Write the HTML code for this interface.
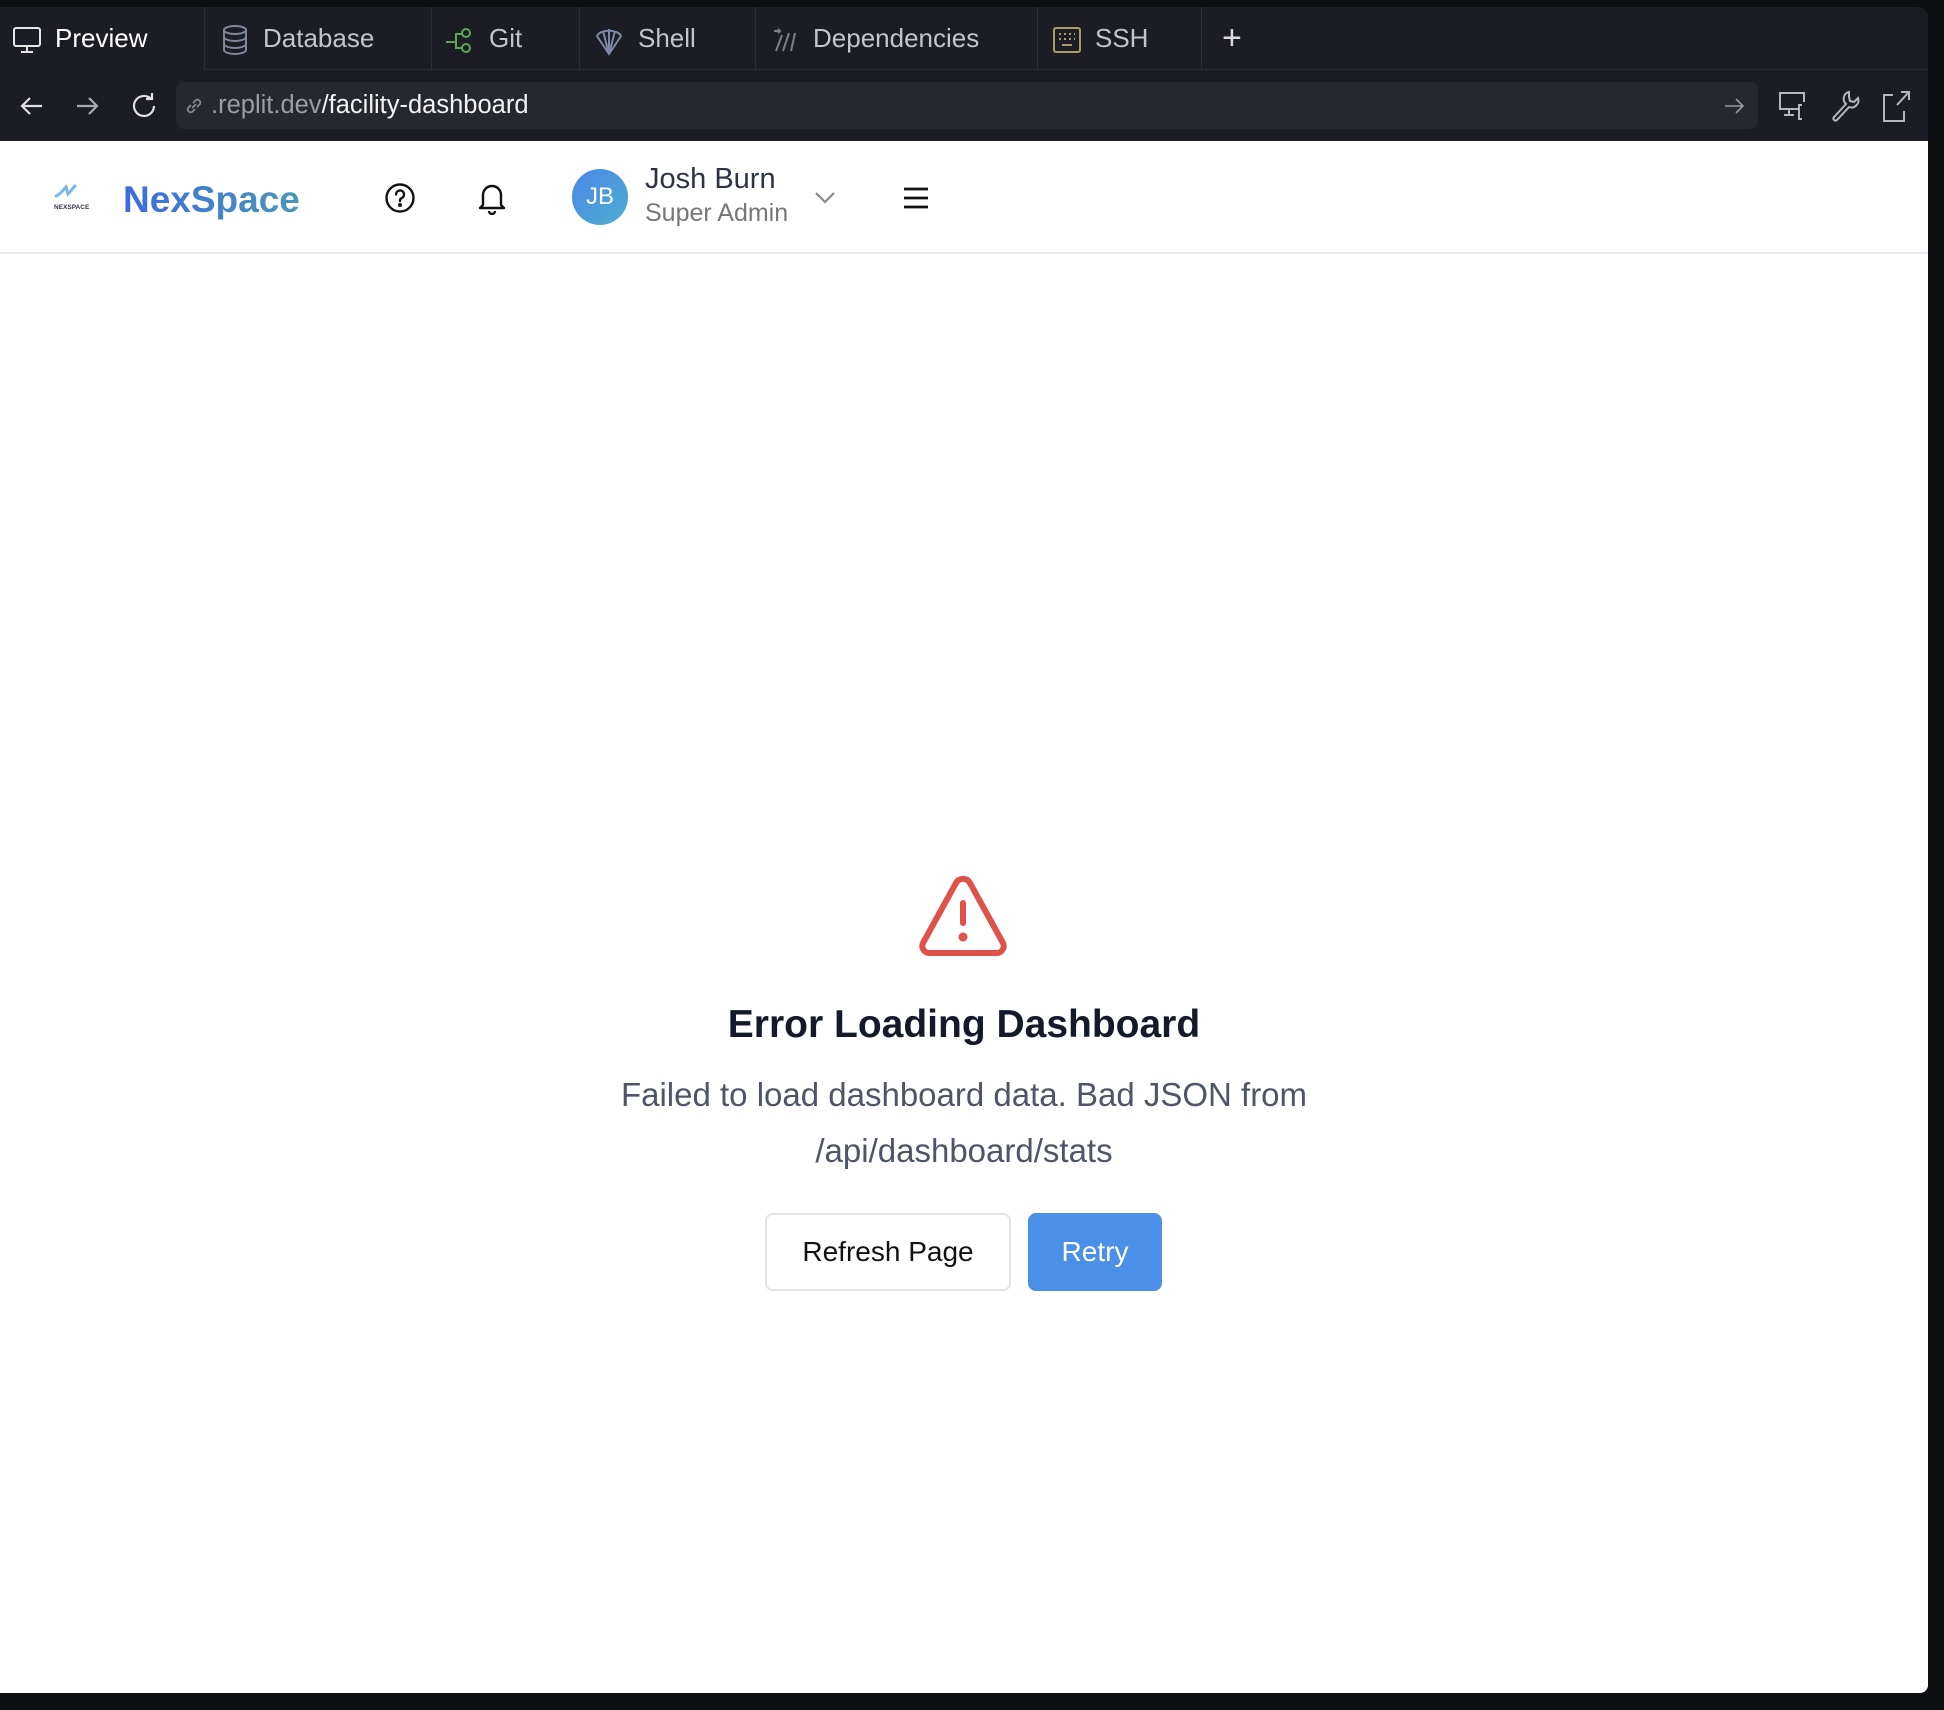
<!DOCTYPE html>
<html><head><meta charset="utf-8"><style>
*{margin:0;padding:0;box-sizing:border-box}
body{width:1944px;height:1710px;background:#0e0f13;font-family:"Liberation Sans",sans-serif;position:relative;overflow:hidden}
.abs{position:absolute}
.tabbar{left:0;top:7px;width:1928px;height:63px;background:#1c1d24;border-radius:0 10px 0 0;border-bottom:1px solid #2a2c35}
.tab{position:absolute;top:7px;height:63px;border-right:1px solid #2c2e37;font-size:26px;color:#c2c5cc}
.tab span{top:16px}
.addr{left:0;top:70px;width:1928px;height:71px;background:#1c1d24}
.url{left:176px;top:82px;width:1582px;height:47px;background:#262830;border-radius:8px}
.page{left:0;top:141px;width:1928px;height:1552px;background:#fff;border-radius:0 0 8px 0}
.hdr{left:0;top:141px;width:1928px;height:113px;border-bottom:2px solid #e8e9ee}
svg{position:absolute}
</style></head><body>
<div class="abs tabbar"></div>
<div class="tab" style="left:0;width:205px;color:#fff;background:#1c1d24">
<svg style="left:12px;top:19px" width="30" height="28" viewBox="0 0 30 28" fill="none" stroke="#e6e6e6" stroke-width="2"><rect x="2" y="2" width="26" height="18" rx="2"/><path d="M15 20v6M9 26h12"/></svg>
<span style="position:absolute;left:55px">Preview</span></div>
<div class="tab" style="left:205px;width:227px">
<svg style="left:16px;top:17px" width="28" height="32" viewBox="0 0 28 32" fill="none" stroke="#7f8898" stroke-width="2"><ellipse cx="14" cy="6" rx="11" ry="4"/><path d="M3 6v20c0 2 5 4 11 4s11-2 11-4V6M3 13c0 2 5 4 11 4s11-2 11-4M3 20c0 2 5 4 11 4s11-2 11-4"/></svg>
<span style="position:absolute;left:58px">Database</span></div>
<div class="tab" style="left:432px;width:148px">
<svg style="left:12px;top:18px" width="32" height="30" viewBox="0 0 32 30" fill="none" stroke="#5fa55a" stroke-width="2"><path d="M2 17h10M12 17v-8h6M12 17v6h6"/><circle cx="22" cy="8" r="4"/><circle cx="22" cy="23" r="4"/></svg>
<span style="position:absolute;left:57px">Git</span></div>
<div class="tab" style="left:580px;width:176px">
<svg style="left:14px;top:17px" width="30" height="32" viewBox="0 0 30 32" fill="none" stroke="#7d8aa3" stroke-width="2"><path d="M15 30L3 12c3-7 21-7 24 0zM15 30L9 7M15 30l6-23M15 30V5"/></svg>
<span style="position:absolute;left:58px">Shell</span></div>
<div class="tab" style="left:756px;width:282px">
<svg style="left:16px;top:20px" width="26" height="26" viewBox="0 0 26 26" fill="none" stroke="#7c7f88" stroke-width="2"><path d="M2 4h6M6 2l2 2-2 2M4 24l6-16M11 24l6-18M19 24l4-18"/></svg>
<span style="position:absolute;left:57px">Dependencies</span></div>
<div class="tab" style="left:1038px;width:164px">
<svg style="left:14px;top:19px" width="30" height="28" viewBox="0 0 30 28" fill="none" stroke="#a89a6a" stroke-width="2"><rect x="2" y="2" width="26" height="24" rx="2"/><path d="M7 8h2M12 8h2M17 8h2M22 8h1M7 13h2M12 13h2M17 13h2M22 13h1M10 19h10"/></svg>
<span style="position:absolute;left:57px">SSH</span></div>
<div class="abs" style="left:1222px;top:19px;font-size:34px;color:#ddd;font-weight:300">+</div>
<div class="abs addr"></div>
<div class="abs url"></div>
<svg style="left:18px;top:92px" width="28" height="28" viewBox="0 0 28 28" fill="none" stroke="#e0e0e0" stroke-width="2.2"><path d="M24 14H4M12 6l-8 8 8 8"/></svg>
<svg style="left:73px;top:92px" width="28" height="28" viewBox="0 0 28 28" fill="none" stroke="#a8abb2" stroke-width="2.2"><path d="M4 14h20M16 6l8 8-8 8"/></svg>
<svg style="left:128px;top:90px" width="32" height="32" viewBox="0 0 32 32" fill="none" stroke="#e0e0e0" stroke-width="2.2"><path d="M26 16a10 10 0 1 1-3-7.2M24 3v6h-6"/></svg>
<svg style="left:183px;top:95px" width="22" height="22" viewBox="0 0 22 22" fill="none" stroke="#888" stroke-width="1.8"><path d="M9 13l4-4M8 10l-3 3a3 3 0 0 0 4 4l3-3M14 12l3-3a3 3 0 0 0-4-4l-3 3"/></svg>
<div class="abs" style="left:211px;top:91px;font-size:25.5px;color:#9a9da5">.replit.dev<span style="color:#f2f2f2">/facility-dashboard</span></div>
<svg style="left:1723px;top:95px" width="22" height="22" viewBox="0 0 22 22" fill="none" stroke="#999" stroke-width="1.6"><path d="M2 11h18M13 4l7 7-7 7"/></svg>
<svg style="left:1776px;top:89px" width="34" height="34" viewBox="0 0 34 34" fill="none" stroke="#b5b7bd" stroke-width="2"><path d="M22 20H4V4h24v9M13 20v5M8 26h10M26 16h-3v14h3"/></svg>
<svg style="left:1829px;top:89px" width="32" height="34" viewBox="0 0 32 34" fill="none" stroke="#b5b7bd" stroke-width="2"><path d="M20 3a7 7 0 0 0-3 12L5 28a2 2 0 0 0 3 3l12-13a7 7 0 0 0 9-9l-4 4-4-1-1-4z"/></svg>
<svg style="left:1880px;top:89px" width="32" height="34" viewBox="0 0 32 34" fill="none" stroke="#b5b7bd" stroke-width="2"><path d="M13 6H4v26h20V22M17 16L29 3M21 3h8v8"/></svg>

<div class="abs page"></div>
<div class="abs hdr"></div>
<svg style="left:52px;top:182px" width="44" height="30" viewBox="0 0 44 30"><path d="M4 14c5-2 8-7 10-9l2 7c3-3 5-6 7-8" fill="none" stroke="#7bb8ea" stroke-width="3" stroke-linecap="round"/><text x="2" y="27" font-family="Liberation Sans" font-size="6.5" font-weight="bold" fill="#333a4a">NEXSPACE</text></svg>
<div class="abs" style="left:123px;top:179px;font-size:37px;font-weight:bold;background:linear-gradient(90deg,#3d6ae0,#4a98b8);-webkit-background-clip:text;color:transparent">NexSpace</div>
<svg style="left:384px;top:182px" width="32" height="32" viewBox="0 0 32 32" fill="none" stroke="#111" stroke-width="2.4"><circle cx="16" cy="16" r="13.5"/><path d="M12 12.5a4 4 0 1 1 5.5 3.7c-1 .5-1.5 1.2-1.5 2.3v.5" stroke-linecap="round"/><circle cx="16" cy="23" r=".8" fill="#111"/></svg>
<svg style="left:477px;top:181px" width="30" height="34" viewBox="0 0 30 34" fill="none" stroke="#111" stroke-width="2.4" stroke-linejoin="round"><path d="M6 24V14a9 9 0 0 1 18 0v10l3 3H3z"/><path d="M12 30a3 3 0 0 0 6 0"/></svg>
<div class="abs" style="left:572px;top:169px;width:56px;height:56px;border-radius:50%;background:linear-gradient(135deg,#4a86e8,#4eaed0);color:#fff;font-size:24px;display:flex;align-items:center;justify-content:center">JB</div>
<div class="abs" style="left:645px;top:163px;font-size:29px;color:#2c3342">Josh Burn</div>
<div class="abs" style="left:645px;top:199px;font-size:25px;color:#777">Super Admin</div>
<svg style="left:813px;top:190px" width="24" height="14" viewBox="0 0 24 14" fill="none" stroke="#888" stroke-width="2.2"><path d="M3 3l9 9 9-9"/></svg>
<svg style="left:902px;top:185px" width="28" height="26" viewBox="0 0 28 26" fill="none" stroke="#111" stroke-width="2.8"><path d="M2 4h24M2 13h24M2 22h24"/></svg>

<svg style="left:918px;top:875px" width="90" height="82" viewBox="0 0 90 82" fill="none" stroke="#df5149" stroke-width="6" stroke-linecap="round" stroke-linejoin="round"><path d="M38 8a8 8 0 0 1 14 0l33 60a7 7 0 0 1-6 10H11a7 7 0 0 1-6-10z"/><path d="M45 28v20"/><circle cx="45" cy="62" r="1.5" fill="#df5149"/></svg>
<div class="abs" style="left:0;width:1928px;top:1003px;text-align:center;font-size:39px;font-weight:bold;color:#141a29">Error Loading Dashboard</div>
<div class="abs" style="left:0;width:1928px;top:1067px;text-align:center;font-size:33px;line-height:56px;color:#4d5566">Failed to load dashboard data. Bad JSON from<br>/api/dashboard/stats</div>
<div class="abs" style="left:765px;top:1213px;width:246px;height:78px;border:2px solid #e2e3e6;border-radius:8px;font-size:28px;color:#111;display:flex;align-items:center;justify-content:center">Refresh Page</div>
<div class="abs" style="left:1028px;top:1213px;width:134px;height:78px;background:#4a8fe8;border-radius:8px;font-size:28px;color:#fff;display:flex;align-items:center;justify-content:center">Retry</div>
</body></html>
